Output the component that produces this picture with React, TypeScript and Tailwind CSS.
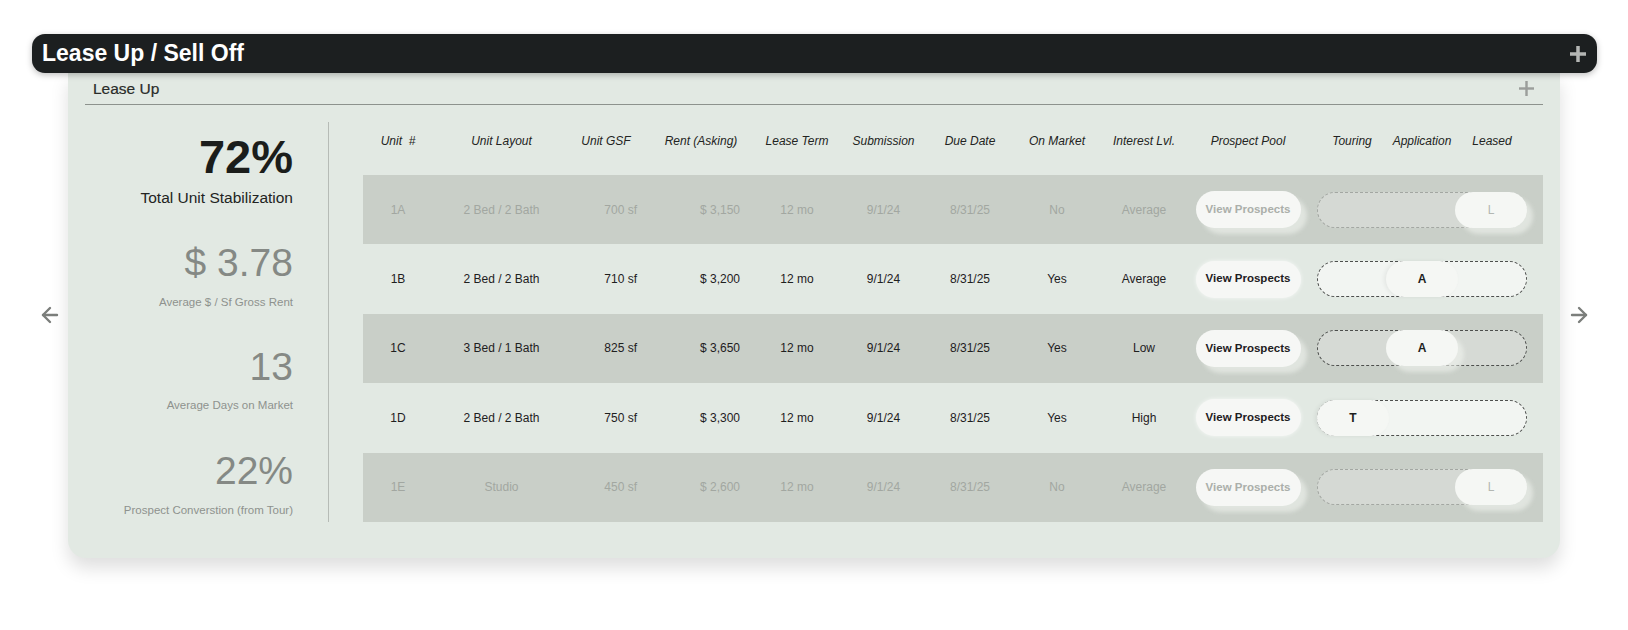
import { ArrowLeft, ArrowRight } from "lucide-react";

type Stage = "T" | "A" | "L";

interface Unit {
  id: string;
  layout: string;
  gsf: string;
  rent: string;
  term: string;
  submission: string;
  due: string;
  onMarket: string;
  interest: string;
  stage: Stage;
}

const units: Unit[] = [
  { id: "1A", layout: "2 Bed / 2 Bath", gsf: "700 sf", rent: "$ 3,150", term: "12 mo", submission: "9/1/24", due: "8/31/25", onMarket: "No", interest: "Average", stage: "L" },
  { id: "1B", layout: "2 Bed / 2 Bath", gsf: "710 sf", rent: "$ 3,200", term: "12 mo", submission: "9/1/24", due: "8/31/25", onMarket: "Yes", interest: "Average", stage: "A" },
  { id: "1C", layout: "3 Bed / 1 Bath", gsf: "825 sf", rent: "$ 3,650", term: "12 mo", submission: "9/1/24", due: "8/31/25", onMarket: "Yes", interest: "Low", stage: "A" },
  { id: "1D", layout: "2 Bed / 2 Bath", gsf: "750 sf", rent: "$ 3,300", term: "12 mo", submission: "9/1/24", due: "8/31/25", onMarket: "Yes", interest: "High", stage: "T" },
  { id: "1E", layout: "Studio", gsf: "450 sf", rent: "$ 2,600", term: "12 mo", submission: "9/1/24", due: "8/31/25", onMarket: "No", interest: "Average", stage: "L" },
];

const cols =
  "grid grid-cols-[70px_137px_72px_118px_74px_99px_74px_100px_74px_134px_1fr]";

const PlusMark = ({ className, bar }: { className: string; bar: number }) => (
  <svg viewBox="0 0 16 16" className={className}>
    <rect x={8 - bar / 2} y="0" width={bar} height="16" fill="currentColor" />
    <rect x="0" y={8 - bar / 2} width="16" height={bar} fill="currentColor" />
  </svg>
);

const Stat = ({
  value,
  label,
  valueClass,
  labelClass,
}: {
  value: string;
  label: string;
  valueClass: string;
  labelClass: string;
}) => (
  <div className="flex flex-col items-end">
    <div className={valueClass}>{value}</div>
    <div className={labelClass}>{label}</div>
  </div>
);

function Pipeline({ stage, shaded }: { stage: Stage; shaded: boolean }) {
  const leased = stage === "L";
  const track = leased
    ? "bg-[#d5d9d4] border-[#a3a7a2]"
    : shaded
    ? "bg-[#d6dad5] border-[#4d4f4d]"
    : "bg-[#f2f5f2] border-[#4d4f4d]";
  const place =
    stage === "T" ? "justify-start" : stage === "A" ? "justify-center" : "justify-end";
  return (
    <div className={`relative ml-[2px] h-[36px] w-[210px] rounded-full border border-dashed ${track}`}>
      <div className={`absolute -inset-px flex ${place}`}>
        <div
          className={`flex h-full w-[72px] items-center justify-center rounded-full bg-[#f5f7f4] text-[12px] ${
            leased ? "font-normal text-[#b3b7b2]" : "font-bold text-[#1d1f1d]"
          } ${
            shaded
              ? "shadow-[6px_6px_4px_rgba(240,243,239,0.6)]"
              : "shadow-[-2px_0_4px_rgba(0,0,0,0.06)]"
          }`}
        >
          {stage}
        </div>
      </div>
    </div>
  );
}

function UnitRow({ unit, shaded }: { unit: Unit; shaded: boolean }) {
  const faded = unit.stage === "L";
  const text = faded ? "text-[#a2a7a1]" : "text-[#1e201e]";
  return (
    <div
      className={`${cols} h-[69.4px] items-center text-[12px] ${text} ${
        shaded ? "bg-[#c9cfc8]" : ""
      }`}
    >
      <div className="text-center">{unit.id}</div>
      <div className="text-center">{unit.layout}</div>
      <div className="pr-[5px] text-right">{unit.gsf}</div>
      <div className="pr-[20px] text-right">{unit.rent}</div>
      <div className="text-center">{unit.term}</div>
      <div className="text-center">{unit.submission}</div>
      <div className="text-center">{unit.due}</div>
      <div className="text-center">{unit.onMarket}</div>
      <div className="text-center">{unit.interest}</div>
      <div className="flex justify-center">
        <button
          className={`h-[37px] w-[105px] rounded-full bg-[#f6f7f5] text-[11.5px] font-bold ${
            faded ? "text-[#abafaa]" : "text-[#1e201e]"
          } ${
            shaded
              ? "shadow-[6px_6px_4px_rgba(240,243,239,0.6)]"
              : "shadow-[0_0_4px_rgba(255,255,255,0.7)]"
          }`}
        >
          View Prospects
        </button>
      </div>
      <div className="flex items-center">
        <Pipeline stage={unit.stage} shaded={shaded} />
      </div>
    </div>
  );
}

export default function App() {
  return (
    <div className="h-[630px] w-full bg-white pl-[32px] pr-[31px] pt-[34px] font-['Liberation_Sans',Arial,sans-serif]">
      <div className="relative z-10 flex h-[39px] items-center justify-between rounded-[13px] bg-[#1c1f20] pl-[10px] pr-[11px] shadow-[0_2px_6px_rgba(0,0,0,0.25)]">
        <h1 className="text-[23px] font-bold leading-none text-white">Lease Up / Sell Off</h1>
        <PlusMark className="h-[16px] w-[16px] text-[#b4b6b4]" bar={3.5} />
      </div>

      <div className="flex items-center">
        <div className="flex w-[36px] justify-center">
          <ArrowLeft className="h-[24px] w-[24px] text-[#7b7e7b]" strokeWidth={2.4} />
        </div>

        <div className="w-[1492px] rounded-b-[18px] bg-[#e2e9e3] px-[17px] pb-[36px] shadow-[0_10px_18px_rgba(0,0,0,0.13)]">
          <div className="flex h-[32px] items-center justify-between border-b border-[#8d928d] pl-[8px] pr-[9px]">
            <span className="text-[15.5px] text-[#2a2c2a] [-webkit-text-stroke:0.2px_#2a2c2a]">Lease Up</span>
            <PlusMark className="h-[15px] w-[15px] text-[#9b9e9b]" bar={2.6} />
          </div>

          <div className="flex pt-[17px]">
            <div className="w-[244px] border-r border-[#b6bbb6] pr-[35px] pt-[11px]">
              <Stat
                value="72%"
                label="Total Unit Stabilization"
                valueClass="text-[47px] font-bold leading-[48px] text-[#1b1d1b]"
                labelClass="mt-[7px] text-[15.5px] leading-[20px] text-[#222422]"
              />
              <div className="mt-[35px]">
                <Stat
                  value="$ 3.78"
                  label="Average $ / Sf Gross Rent"
                  valueClass="text-[39px] leading-[40px] text-[#858985]"
                  labelClass="mt-[11px] text-[11.5px] leading-[16px] text-[#8e928e]"
                />
              </div>
              <div className="mt-[37px]">
                <Stat
                  value="13"
                  label="Average Days on Market"
                  valueClass="text-[39px] leading-[40px] text-[#858985]"
                  labelClass="mt-[10px] text-[11.5px] leading-[16px] text-[#8e928e]"
                />
              </div>
              <div className="mt-[38px]">
                <Stat
                  value="22%"
                  label="Prospect Converstion (from Tour)"
                  valueClass="text-[39px] leading-[40px] text-[#858985]"
                  labelClass="mt-[11px] text-[11.5px] leading-[16px] text-[#8e928e]"
                />
              </div>
            </div>

            <div className="ml-[34px] w-[1180px]">
              <div className={`${cols} h-[53px] items-start pt-[11px] text-[12px] italic leading-[16px] text-[#222422]`}>
                <div className="text-center">Unit&nbsp; #</div>
                <div className="text-center">Unit Layout</div>
                <div className="text-center">Unit GSF</div>
                <div className="text-center">Rent (Asking)</div>
                <div className="text-center">Lease Term</div>
                <div className="text-center">Submission</div>
                <div className="text-center">Due Date</div>
                <div className="text-center">On Market</div>
                <div className="text-center">Interest Lvl.</div>
                <div className="text-center">Prospect Pool</div>
                <div className="ml-[2px] grid w-[210px] grid-cols-3 text-center">
                  <span>Touring</span>
                  <span>Application</span>
                  <span>Leased</span>
                </div>
              </div>
              {units.map((u, i) => (
                <UnitRow key={u.id} unit={u} shaded={i % 2 === 0} />
              ))}
            </div>
          </div>
        </div>

        <div className="flex w-[37px] justify-center">
          <ArrowRight className="h-[24px] w-[24px] text-[#7b7e7b]" strokeWidth={2.4} />
        </div>
      </div>
    </div>
  );
}
